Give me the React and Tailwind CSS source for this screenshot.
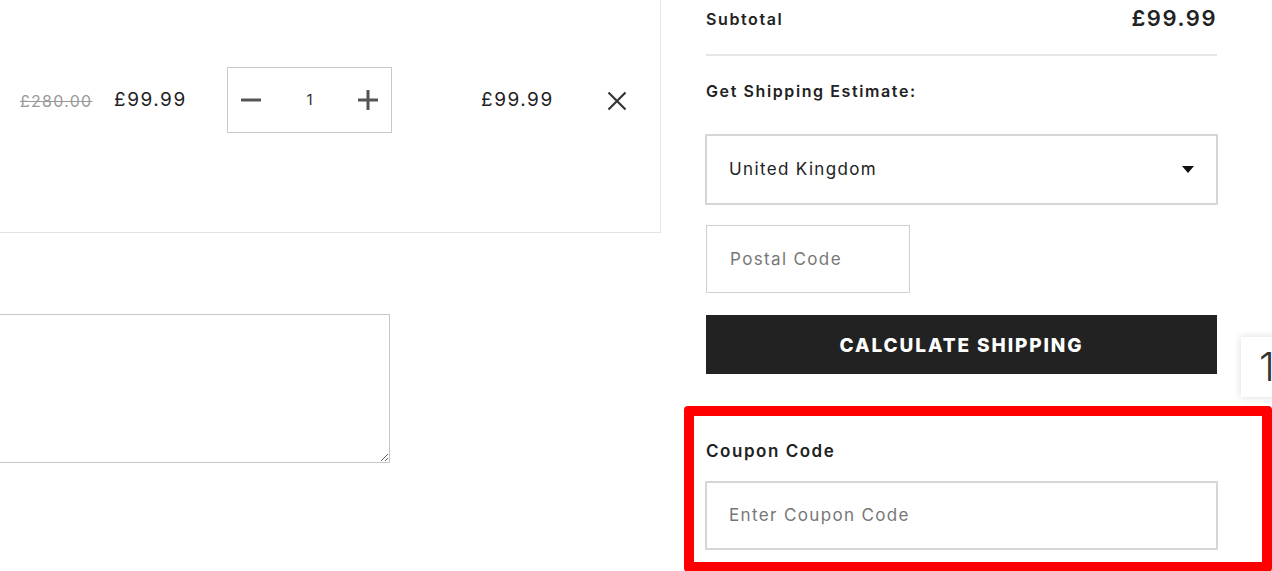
const font = { fontFamily: "Inter, 'Open Sans', sans-serif" };

function MinusIcon() {
  return (
    <svg width="20" height="20" viewBox="0 0 20 20">
      <path d="M0 10h20" stroke="#555" strokeWidth="3" />
    </svg>
  );
}

function PlusIcon() {
  return (
    <svg width="20" height="20" viewBox="0 0 20 20">
      <path d="M0 10h20M10 0v20" stroke="#555" strokeWidth="3" />
    </svg>
  );
}

function CloseIcon() {
  return (
    <svg width="20" height="20" viewBox="0 0 20 20">
      <path d="M1.5 1.5l17 17M18.5 1.5l-17 17" stroke="#333" strokeWidth="2.2" />
    </svg>
  );
}

function CartRow() {
  return (
    <div className="w-[661px] h-[233px] border-r border-b border-[#e3e3e3] pt-[68px]">
      <div className="flex items-center pl-[20px]">
        <span className="w-[72px] text-[16px] tracking-[0.08em] text-[#999] line-through">£280.00</span>
        <span className="ml-[22px] w-[73px] text-[19px] tracking-[0.08em] text-[#222]">£99.99</span>
        <div className="ml-[40px] -mt-[1px] flex h-[66px] w-[165px] items-center justify-between border border-[#c9c9c9] pl-[13px] pr-[13px]">
          <MinusIcon />
          <span className="text-[15px] text-[#333]">1</span>
          <PlusIcon />
        </div>
        <span className="ml-[89px] w-[74px] text-[19px] tracking-[0.08em] text-[#222]">£99.99</span>
        <span className="ml-[52px]">
          <CloseIcon />
        </span>
      </div>
    </div>
  );
}

function ShippingPanel() {
  return (
    <div className="w-[511px]">
      <div className="flex items-center justify-between pt-[2px] pb-[19px] border-b-2 border-[#e6e6e6]">
        <span className="text-[16px] font-semibold tracking-[0.1em] text-[#222]">Subtotal</span>
        <span className="text-[22px] font-semibold tracking-[0.07em] text-[#222]">£99.99</span>
      </div>

      <p className="mt-[23px] text-[16px] font-semibold tracking-[0.1em] text-[#222]">Get Shipping Estimate:</p>

      <div className="mt-[31px] -ml-[1px] flex h-[71px] w-[513px] items-center justify-between border-2 border-[#d6d6d6] pl-[22px] pr-[22px]">
        <span className="text-[17px] tracking-[0.08em] text-[#222]">United Kingdom</span>
        <svg width="12" height="7" viewBox="0 0 12 7">
          <path d="M0 0h12L6 7z" fill="#111" />
        </svg>
      </div>

      <input
        placeholder="Postal Code"
        className="mt-[20px] block h-[68px] w-[204px] border border-[#cfcfcf] px-[23px] text-[17px] tracking-[0.08em] outline-none placeholder:text-[#777]"
      />

      <button className="mt-[22px] flex h-[59px] w-full items-center justify-center bg-[#222] pt-[3px] text-[19px] font-extrabold tracking-[0.1em] text-white">
        CALCULATE SHIPPING
      </button>

      {/* coupon block, highlighted */}
      <div className="mt-[32px] -ml-[22px] w-[588px] rounded-[4px] border-[10px] border-[#ff0000] pl-[12px] pt-[23px] pb-[12px]">
        <p className="text-[17px] font-semibold tracking-[0.09em] text-[#222]">Coupon Code</p>
        <input
          placeholder="Enter Coupon Code"
          className="mt-[16px] -ml-[1px] block h-[69px] w-[513px] border-2 border-[#d6d6d6] px-[22px] text-[17px] tracking-[0.08em] outline-none placeholder:text-[#777]"
        />
      </div>
    </div>
  );
}

export default function App() {
  return (
    <div className="relative h-[571px] w-[1272px] overflow-hidden bg-white" style={font}>
      <div className="flex">
        <div className="flex flex-col">
          <CartRow />
          <textarea className="mt-[81px] -ml-[10px] h-[149px] w-[400px] border border-[#c6c6c6] outline-none" />
        </div>
        <div className="ml-[45px]">
          <ShippingPanel />
        </div>
      </div>

      {/* floating page tab */}
      <div className="absolute left-[1241px] top-[337px] flex h-[60px] w-[70px] items-center bg-white pl-[18px] shadow-[0_0_8px_rgba(0,0,0,0.15)]">
        <span className="text-[40px] font-light text-[#333]">1</span>
      </div>
    </div>
  );
}
